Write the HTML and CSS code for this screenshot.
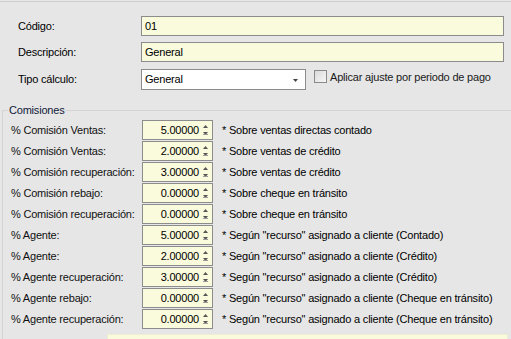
FILE: index.html
```html
<!DOCTYPE html>
<html lang="es">
<head>
<meta charset="utf-8">
<link rel="stylesheet" href="styles.css">
</head>
<body>
<div class="window">
  <div class="top">
    <div class="field">
      <span class="lbl">Código:</span>
      <div class="input wide">01</div>
    </div>
    <div class="field">
      <span class="lbl">Descripción:</span>
      <div class="input wide">General</div>
    </div>
    <div class="field">
      <span class="lbl">Tipo cálculo:</span>
      <div class="select">General
        <svg class="dd" width="5" height="3" viewBox="0 0 5 3"><path d="M0 0h5L2.5 3z" fill="#444"/></svg>
      </div>
      <label class="check"><span class="cbox"></span>Aplicar ajuste por periodo de pago</label>
    </div>
  </div>

  <fieldset class="group">
    <legend>Comisiones</legend>
    <div class="rows">
      <div class="row"><span class="rl">% Comisión Ventas:</span><div class="spin"><span>5.00000</span><svg class="arr" width="7" height="12" viewBox="0 0 7 12"><path d="M1 4L3.5 1L6 4z" fill="#555"/><path d="M1 8h5L3.5 11z" fill="#555"/><path d="M1 10.5h5" stroke="#999"/></svg></div><span class="desc">* Sobre ventas directas contado</span></div>
      <div class="row"><span class="rl">% Comisión Ventas:</span><div class="spin"><span>2.00000</span><svg class="arr" width="7" height="12" viewBox="0 0 7 12"><path d="M1 4L3.5 1L6 4z" fill="#555"/><path d="M1 8h5L3.5 11z" fill="#555"/><path d="M1 10.5h5" stroke="#999"/></svg></div><span class="desc">* Sobre ventas de crédito</span></div>
      <div class="row"><span class="rl">% Comisión recuperación:</span><div class="spin"><span>3.00000</span><svg class="arr" width="7" height="12" viewBox="0 0 7 12"><path d="M1 4L3.5 1L6 4z" fill="#555"/><path d="M1 8h5L3.5 11z" fill="#555"/><path d="M1 10.5h5" stroke="#999"/></svg></div><span class="desc">* Sobre ventas de crédito</span></div>
      <div class="row"><span class="rl">% Comisión rebajo:</span><div class="spin"><span>0.00000</span><svg class="arr" width="7" height="12" viewBox="0 0 7 12"><path d="M1 4L3.5 1L6 4z" fill="#555"/><path d="M1 8h5L3.5 11z" fill="#555"/><path d="M1 10.5h5" stroke="#999"/></svg></div><span class="desc">* Sobre cheque en tránsito</span></div>
      <div class="row"><span class="rl">% Comisión recuperación:</span><div class="spin"><span>0.00000</span><svg class="arr" width="7" height="12" viewBox="0 0 7 12"><path d="M1 4L3.5 1L6 4z" fill="#555"/><path d="M1 8h5L3.5 11z" fill="#555"/><path d="M1 10.5h5" stroke="#999"/></svg></div><span class="desc">* Sobre cheque en tránsito</span></div>
      <div class="row"><span class="rl">% Agente:</span><div class="spin"><span>5.00000</span><svg class="arr" width="7" height="12" viewBox="0 0 7 12"><path d="M1 4L3.5 1L6 4z" fill="#555"/><path d="M1 8h5L3.5 11z" fill="#555"/><path d="M1 10.5h5" stroke="#999"/></svg></div><span class="desc">* Según "recurso" asignado a cliente (Contado)</span></div>
      <div class="row"><span class="rl">% Agente:</span><div class="spin"><span>2.00000</span><svg class="arr" width="7" height="12" viewBox="0 0 7 12"><path d="M1 4L3.5 1L6 4z" fill="#555"/><path d="M1 8h5L3.5 11z" fill="#555"/><path d="M1 10.5h5" stroke="#999"/></svg></div><span class="desc">* Según "recurso" asignado a cliente (Crédito)</span></div>
      <div class="row"><span class="rl">% Agente recuperación:</span><div class="spin"><span>3.00000</span><svg class="arr" width="7" height="12" viewBox="0 0 7 12"><path d="M1 4L3.5 1L6 4z" fill="#555"/><path d="M1 8h5L3.5 11z" fill="#555"/><path d="M1 10.5h5" stroke="#999"/></svg></div><span class="desc">* Según "recurso" asignado a cliente (Crédito)</span></div>
      <div class="row"><span class="rl">% Agente rebajo:</span><div class="spin"><span>0.00000</span><svg class="arr" width="7" height="12" viewBox="0 0 7 12"><path d="M1 4L3.5 1L6 4z" fill="#555"/><path d="M1 8h5L3.5 11z" fill="#555"/><path d="M1 10.5h5" stroke="#999"/></svg></div><span class="desc">* Según "recurso" asignado a cliente (Cheque en tránsito)</span></div>
      <div class="row"><span class="rl">% Agente recuperación:</span><div class="spin"><span>0.00000</span><svg class="arr" width="7" height="12" viewBox="0 0 7 12"><path d="M1 4L3.5 1L6 4z" fill="#555"/><path d="M1 8h5L3.5 11z" fill="#555"/><path d="M1 10.5h5" stroke="#999"/></svg></div><span class="desc">* Según "recurso" asignado a cliente (Cheque en tránsito)</span></div>
    </div>
    <div class="note"></div>
  </fieldset>
</div>
</body>
</html>
```

FILE: styles.css
```css
html, body {
  margin: 0;
  padding: 0;
  background: #e6e6e6;
  overflow: hidden;
}
body {
  font-family: "Liberation Sans", Arial, sans-serif;
  font-size: 11px;
  letter-spacing: -0.2px;
  color: #000;
}
.window {
  width: 511px;
  height: 339px;
  border-top: 1px solid #cfcfcf;
  margin-top: 1px;
  box-sizing: border-box;
}
.top {
  display: flex;
  flex-direction: column;
  gap: 6px;
  padding-top: 14px;
}
.field {
  display: flex;
  align-items: center;
  height: 20px;
}
.lbl {
  width: 123px;
  padding-left: 18px;
  flex: none;
}
.input {
  height: 20px;
  box-sizing: border-box;
  border: 1px solid #8c8c8c;
  background: #fafadc;
  padding: 2px 3px;
  line-height: 14px;
}
.wide {
  width: 363px;
}
.select {
  width: 165px;
  height: 21px;
  box-sizing: border-box;
  border: 1px solid #8c8c8c;
  background: #fff;
  padding: 3px 3px;
  line-height: 13px;
  display: flex;
  justify-content: space-between;
  align-items: center;
}
.select .dd {
  margin-right: 4px;
  margin-top: 2px;
}
.field:nth-child(3) {
  margin-top: 1px;
}
.check {
  display: flex;
  align-items: center;
  margin-left: 8px;
  margin-top: -5px;
  color: #1a1a1a;
}
.cbox {
  width: 11px;
  height: 11px;
  border: 1px solid #8a8a8a;
  background: linear-gradient(135deg, #d9d9d9, #f6f6f6);
  margin-right: 3px;
}
.group {
  margin: 15px 0 0 2px;
  padding: 3px 0 0 8px;
  border: 1px solid #d4d4d4;
  border-right: none;
  border-bottom: none;
  min-width: 0;
}
.group legend {
  padding: 0 1px;
  margin-left: -3px;
  line-height: 13px;
  color: #10203a;
}
.rows {
  display: flex;
  flex-direction: column;
  gap: 1px;
}
.row {
  display: flex;
  align-items: center;
  height: 20px;
}
.rl {
  width: 131px;
  flex: none;
  color: #111;
}
.spin {
  width: 71px;
  height: 20px;
  box-sizing: border-box;
  border: 1px solid #8c8c8c;
  background: #fafadc;
  display: flex;
  align-items: center;
  justify-content: flex-end;
  padding-right: 3px;
  flex: none;
}
.spin span {
  margin-right: 3px;
}
.desc {
  margin-left: 9px;
  white-space: nowrap;
}
.note {
  margin: 5px 0 0 96px;
  width: 401px;
  height: 20px;
  background: #fafadc;
  border: 1px solid #eeeed0;
  box-sizing: border-box;
}
```
